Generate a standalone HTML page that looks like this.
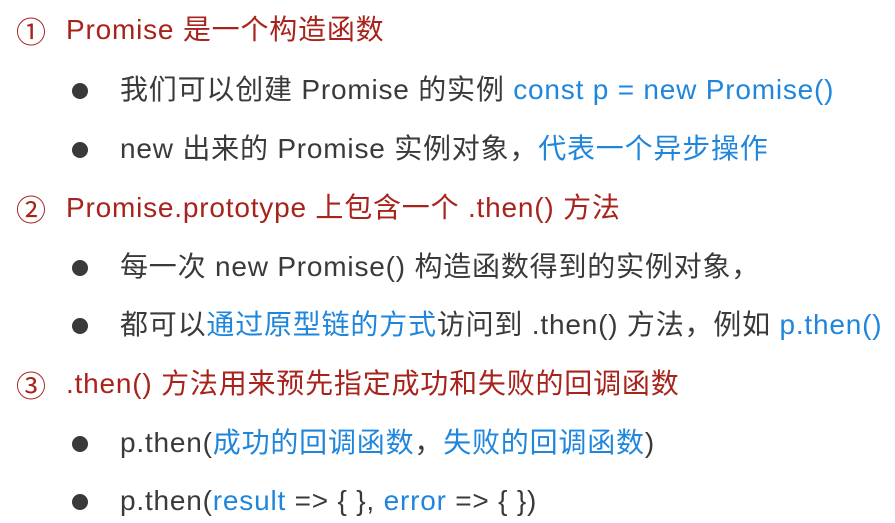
<!DOCTYPE html>
<html><head><meta charset="utf-8"><style>
body{margin:0;width:895px;height:523px;background:#fff;overflow:hidden;position:relative;font-family:"Liberation Sans","Noto Sans CJK SC",sans-serif;font-size:28px;letter-spacing:0.8px;}
.l{position:absolute;white-space:nowrap;line-height:1;}
.h{color:#a8231c;}
.b{color:#3a3a3a;left:120px;}
.d{position:absolute;left:72px;width:16px;height:16px;border-radius:50%;background:#3a3a3a;}
.c{color:#1f86dc;}
.nn{font-family:"Noto Sans CJK SC",sans-serif;font-size:30px;}
</style></head><body>
<div class="l h nn" style="left:16px;top:15px">①</div><div class="l h" style="left:66px;top:16px">Promise 是一个构造函数</div>
<div class="d" style="top:83px"></div><div class="l b" style="top:76px">我们可以创建 Promise 的实例 <span class="c">const p = new Promise()</span></div>
<div class="d" style="top:142px"></div><div class="l b" style="top:135px">new 出来的 Promise 实例对象，<span class="c">代表一个异步操作</span></div>
<div class="l h nn" style="left:16px;top:193px">②</div><div class="l h" style="left:66px;top:194px">Promise.prototype 上包含一个 .then() 方法</div>
<div class="d" style="top:260px"></div><div class="l b" style="top:253px">每一次 new Promise() 构造函数得到的实例对象，</div>
<div class="d" style="top:318px"></div><div class="l b" style="top:311px">都可以<span class="c">通过原型链的方式</span>访问到 .then() 方法，例如 <span class="c">p.then()</span></div>
<div class="l h nn" style="left:16px;top:369px">③</div><div class="l h" style="left:66px;top:370px">.then() 方法用来预先指定成功和失败的回调函数</div>
<div class="d" style="top:436px"></div><div class="l b" style="top:429px">p.then(<span class="c">成功的回调函数</span>，<span class="c">失败的回调函数</span>)</div>
<div class="d" style="top:494px"></div><div class="l b" style="top:487px">p.then(<span class="c">result</span> =&gt; { }, <span class="c">error</span> =&gt; { })</div>
</body></html>
